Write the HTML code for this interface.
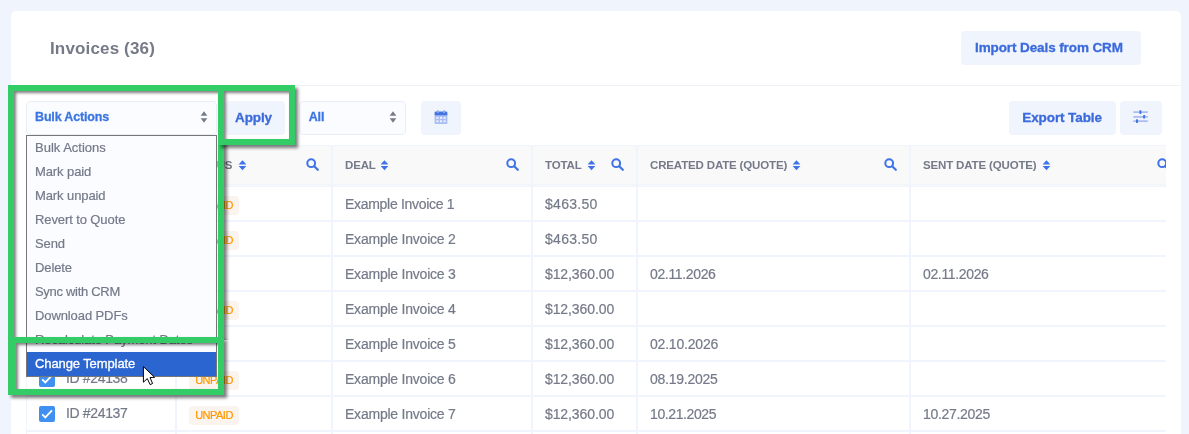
<!DOCTYPE html>
<html lang="en">
<head>
<meta charset="utf-8">
<title>Invoices</title>
<style>
*{box-sizing:border-box;margin:0;padding:0}
html,body{width:1189px;height:434px;overflow:hidden}
body{background:#f0f4fd;-webkit-font-smoothing:antialiased;font-family:"Liberation Sans",Arial,sans-serif;color:#747a89;position:relative}
.abs{position:absolute}
.tbl,.dd,.btn,.sel,.title{will-change:transform}
svg{display:block}
.card{position:absolute;left:11px;top:11px;width:1170px;height:500px;background:#fff;border-radius:5px}
.title{position:absolute;left:50px;top:39px;font-size:17px;font-weight:bold;color:#757a86;line-height:20px;white-space:nowrap;letter-spacing:.15px}
.hr{position:absolute;left:11px;top:85px;width:1170px;height:1px;background:#eef1f6}
.btn{position:absolute;background:#f0f4fd;border-radius:4px;color:#3b6bdb;font-weight:bold;font-size:13.5px;text-align:left;padding-left:14px;white-space:nowrap;letter-spacing:-.1px;line-height:33px;-webkit-text-stroke:.3px #3b6bdb}
.sel{position:absolute;background:#fbfcff;border:1px solid #e9eef6;border-radius:4px;color:#3b76e1;font-weight:bold;font-size:12.5px;white-space:nowrap;letter-spacing:-.15px;-webkit-text-stroke:.3px #3b76e1}
.sel span{position:absolute;left:8px;top:0;line-height:30px}
.sel svg{position:absolute;right:8px;top:9px}
.tbl{position:absolute;left:26px;top:145px;width:1140px;height:289px;overflow:hidden;background:#fff;border-left:1px solid #f0f4fd}
.th{position:absolute;top:0;height:42px;background:#f9f9f9;border-top:1px solid #f0f4fd;border-right:2px solid #f0f4fd;border-bottom:1px solid #f0f4fd;font-size:11.5px;font-weight:bold;color:#747a89;text-transform:uppercase;white-space:nowrap;letter-spacing:-.15px}
.th:after{content:"";position:absolute;left:0;right:0;top:38px;height:1px;background:#f0f4fd}
.th .lbl{position:absolute;left:12px;top:-1px;line-height:41px}
.th svg.sort{position:absolute;top:13.5px;margin-left:-.5px}
.th svg.mag{position:absolute;top:12px}
.row{position:absolute;left:0;width:1140px;height:35px;border-bottom:2px solid #f0f4fd}
.cell{position:absolute;top:0;height:35px;border-right:2px solid #f0f4fd;font-size:14px;color:#747a89;line-height:35px;white-space:nowrap;letter-spacing:-.15px;-webkit-text-stroke:.2px #747a89}
.cell .t{position:absolute;left:12px;top:0}
.badge{position:absolute;left:12px;top:9px;height:19px;width:50px;border-radius:4px;background:#fbf3ee;color:#ff9800;font-size:11px;line-height:19px;text-align:center;letter-spacing:-.5px;text-indent:0;-webkit-text-stroke:.2px #ff9800}
.badge.paid{width:28px;letter-spacing:-.6px;background:#e6f6fd;color:#35b8e8}
.cb{position:absolute;left:13px;top:9px;width:16px;height:16px;border-radius:2px;background:#3f90f1}
.g{position:absolute;border:6px solid #33cc66;box-shadow:3px 3px 3px rgba(0,0,0,.5), inset 2px 2px 3px rgba(0,0,0,.5)}
.dd{position:absolute;left:26px;top:135px;width:191px;height:242px;border:1px solid #767676;background:#fbfcff;font-size:13px;color:#747a89;letter-spacing:-.1px;-webkit-text-stroke:.2px #747a89}
.dd div{height:24px;line-height:23px;padding-left:8px;white-space:nowrap}
.dd div.on{background:#2b65d0;color:#fff;-webkit-text-stroke:.3px #fff}
</style>
</head>
<body>
<div class="card"></div>
<div class="title">Invoices (36)</div>
<div class="btn" style="left:961px;top:31px;width:180px;height:34px">Import Deals from CRM</div>
<div class="hr"></div>

<div class="sel" style="left:26px;top:101px;width:191px;height:34px"><span>Bulk Actions</span><svg width="8" height="12" viewBox="0 0 8 12"><path d="M4 0.3 L7.3 4.8 H0.7 Z M4 11.7 L7.3 7.2 H0.7 Z" fill="#757b8a"/></svg></div>
<div class="btn" style="left:225px;top:101px;width:60px;height:34px;padding-left:10px">Apply</div>
<div class="sel" style="left:299px;top:101px;width:107px;height:34px"><span style="left:8.7px">All</span><svg width="8" height="12" viewBox="0 0 8 12"><path d="M4 0.3 L7.3 4.8 H0.7 Z M4 11.7 L7.3 7.2 H0.7 Z" fill="#757b8a"/></svg></div>
<div class="btn" style="left:421px;top:101px;width:40px;height:34px"><svg class="abs" style="left:13px;top:9px" width="14" height="15" viewBox="0 0 14 15"><rect x="0.6" y="1.5" width="12.8" height="4.6" rx="1.3" fill="#4474e2"/><rect x="3" y="0.2" width="1.8" height="2.8" rx=".6" fill="#8fabf0"/><rect x="9.2" y="0.2" width="1.8" height="2.8" rx=".6" fill="#8fabf0"/><path d="M0.6 5.2 H13.4 V12.7 a1.3 1.3 0 0 1 -1.3 1.3 H1.9 a1.3 1.3 0 0 1 -1.3 -1.3 Z" fill="#a9bdf3"/><g fill="#eef3fe"><rect x="2.4" y="6.9" width="2.1" height="1.9"/><rect x="5.95" y="6.9" width="2.1" height="1.9"/><rect x="9.5" y="6.9" width="2.1" height="1.9"/><rect x="2.4" y="10.3" width="2.1" height="1.9"/><rect x="5.95" y="10.3" width="2.1" height="1.9"/><rect x="9.5" y="10.3" width="2.1" height="1.9"/></g></svg></div>
<div class="btn" style="left:1009px;top:101px;width:107px;height:34px;padding-left:13.3px">Export Table</div>
<div class="btn" style="left:1120px;top:101px;width:42px;height:34px"><svg class="abs" style="left:13px;top:9px" width="16" height="15" viewBox="0 0 16 15"><g stroke="#a9bdf3" stroke-width="1.7"><path d="M0.3 2.1H14.8M0.3 6.8H14.8M0.3 11.1H14.8"/></g><g fill="#3f74e8"><rect x="6.4" y="0.3" width="2" height="3.6" rx=".6"/><rect x="10.1" y="5" width="2" height="3.6" rx=".6"/><rect x="3" y="9.3" width="2" height="3.6" rx=".6"/></g></svg></div>

<div class="tbl">
<div class="th" style="left:-1px;width:151px"></div>
<div class="th" style="left:150px;width:156px"><span class="lbl">Status</span><svg class="sort" style="left:61.0px" width="9" height="11" viewBox="0 0 9 11"><path d="M4.5 0.2 L8.4 4.6 H0.6 Z M4.5 10.3 L8.4 5.9 H0.6 Z" fill="#3f74e8"/></svg><svg class="mag" style="left:129px" width="13" height="13" viewBox="0 0 13 13"><circle cx="5.2" cy="5.2" r="3.9" fill="none" stroke="#3f74e8" stroke-width="2"/><path d="M8.2 8.2 L11.8 11.8" stroke="#3f74e8" stroke-width="2.2" stroke-linecap="round"/></svg></div>
<div class="th" style="left:306px;width:200px"><span class="lbl">Deal</span><svg class="sort" style="left:47.3px" width="9" height="11" viewBox="0 0 9 11"><path d="M4.5 0.2 L8.4 4.6 H0.6 Z M4.5 10.3 L8.4 5.9 H0.6 Z" fill="#3f74e8"/></svg><svg class="mag" style="left:173px" width="13" height="13" viewBox="0 0 13 13"><circle cx="5.2" cy="5.2" r="3.9" fill="none" stroke="#3f74e8" stroke-width="2"/><path d="M8.2 8.2 L11.8 11.8" stroke="#3f74e8" stroke-width="2.2" stroke-linecap="round"/></svg></div>
<div class="th" style="left:506px;width:105px"><span class="lbl">Total</span><svg class="sort" style="left:54.0px" width="9" height="11" viewBox="0 0 9 11"><path d="M4.5 0.2 L8.4 4.6 H0.6 Z M4.5 10.3 L8.4 5.9 H0.6 Z" fill="#3f74e8"/></svg><svg class="mag" style="left:78px" width="13" height="13" viewBox="0 0 13 13"><circle cx="5.2" cy="5.2" r="3.9" fill="none" stroke="#3f74e8" stroke-width="2"/><path d="M8.2 8.2 L11.8 11.8" stroke="#3f74e8" stroke-width="2.2" stroke-linecap="round"/></svg></div>
<div class="th" style="left:611px;width:273px"><span class="lbl">Created Date (Quote)</span><svg class="sort" style="left:154.3px" width="9" height="11" viewBox="0 0 9 11"><path d="M4.5 0.2 L8.4 4.6 H0.6 Z M4.5 10.3 L8.4 5.9 H0.6 Z" fill="#3f74e8"/></svg><svg class="mag" style="left:246px" width="13" height="13" viewBox="0 0 13 13"><circle cx="5.2" cy="5.2" r="3.9" fill="none" stroke="#3f74e8" stroke-width="2"/><path d="M8.2 8.2 L11.8 11.8" stroke="#3f74e8" stroke-width="2.2" stroke-linecap="round"/></svg></div>
<div class="th" style="left:884px;width:301px"><span class="lbl">Sent Date (Quote)</span><svg class="sort" style="left:131.5px" width="9" height="11" viewBox="0 0 9 11"><path d="M4.5 0.2 L8.4 4.6 H0.6 Z M4.5 10.3 L8.4 5.9 H0.6 Z" fill="#3f74e8"/></svg><svg class="mag" style="left:246px" width="13" height="13" viewBox="0 0 13 13"><circle cx="5.2" cy="5.2" r="3.9" fill="none" stroke="#3f74e8" stroke-width="2"/><path d="M8.2 8.2 L11.8 11.8" stroke="#3f74e8" stroke-width="2.2" stroke-linecap="round"/></svg></div>
<div class="row" style="top:42px"><div class="cell" style="left:-1px;width:151px"><span class="cb"><svg width="16" height="16" viewBox="0 0 16 16"><path d="M3.2 8.4 L6.3 11.4 L13 4.3" fill="none" stroke="#fff" stroke-width="1.8"/></svg></span><span class="t" style="left:40px;top:-1px;letter-spacing:-.35px">ID #24143</span></div><div class="cell" style="left:150px;width:156px"><span class="badge">UNPAID</span></div><div class="cell" style="left:306px;width:200px"><span class="t" style="letter-spacing:-0.3px">Example Invoice 1</span></div><div class="cell" style="left:506px;width:105px"><span class="t" style="letter-spacing:0.3px">$463.50</span></div><div class="cell" style="left:611px;width:273px"></div><div class="cell" style="left:884px;width:301px"></div></div>
<div class="row" style="top:77px"><div class="cell" style="left:-1px;width:151px"><span class="cb"><svg width="16" height="16" viewBox="0 0 16 16"><path d="M3.2 8.4 L6.3 11.4 L13 4.3" fill="none" stroke="#fff" stroke-width="1.8"/></svg></span><span class="t" style="left:40px;top:-1px;letter-spacing:-.35px">ID #24142</span></div><div class="cell" style="left:150px;width:156px"><span class="badge">UNPAID</span></div><div class="cell" style="left:306px;width:200px"><span class="t" style="letter-spacing:-0.22px">Example Invoice 2</span></div><div class="cell" style="left:506px;width:105px"><span class="t" style="letter-spacing:0.3px">$463.50</span></div><div class="cell" style="left:611px;width:273px"></div><div class="cell" style="left:884px;width:301px"></div></div>
<div class="row" style="top:112px"><div class="cell" style="left:-1px;width:151px"><span class="cb"><svg width="16" height="16" viewBox="0 0 16 16"><path d="M3.2 8.4 L6.3 11.4 L13 4.3" fill="none" stroke="#fff" stroke-width="1.8"/></svg></span><span class="t" style="left:40px;top:-1px;letter-spacing:-.35px">ID #24141</span></div><div class="cell" style="left:150px;width:156px"><span class="badge paid">PAID</span></div><div class="cell" style="left:306px;width:200px"><span class="t" style="letter-spacing:-0.22px">Example Invoice 3</span></div><div class="cell" style="left:506px;width:105px"><span class="t" style="letter-spacing:-0.1px">$12,360.00</span></div><div class="cell" style="left:611px;width:273px"><span class="t" style="letter-spacing:-0.35px">02.11.2026</span></div><div class="cell" style="left:884px;width:301px"><span class="t" style="letter-spacing:-0.35px">02.11.2026</span></div></div>
<div class="row" style="top:147px"><div class="cell" style="left:-1px;width:151px"><span class="cb"><svg width="16" height="16" viewBox="0 0 16 16"><path d="M3.2 8.4 L6.3 11.4 L13 4.3" fill="none" stroke="#fff" stroke-width="1.8"/></svg></span><span class="t" style="left:40px;top:-1px;letter-spacing:-.35px">ID #24140</span></div><div class="cell" style="left:150px;width:156px"><span class="badge">UNPAID</span></div><div class="cell" style="left:306px;width:200px"><span class="t" style="letter-spacing:-0.22px">Example Invoice 4</span></div><div class="cell" style="left:506px;width:105px"><span class="t" style="letter-spacing:-0.1px">$12,360.00</span></div><div class="cell" style="left:611px;width:273px"></div><div class="cell" style="left:884px;width:301px"></div></div>
<div class="row" style="top:182px"><div class="cell" style="left:-1px;width:151px"><span class="cb"><svg width="16" height="16" viewBox="0 0 16 16"><path d="M3.2 8.4 L6.3 11.4 L13 4.3" fill="none" stroke="#fff" stroke-width="1.8"/></svg></span><span class="t" style="left:40px;top:-1px;letter-spacing:-.35px">ID #24139</span></div><div class="cell" style="left:150px;width:156px"><span class="badge paid">PAID</span></div><div class="cell" style="left:306px;width:200px"><span class="t" style="letter-spacing:-0.22px">Example Invoice 5</span></div><div class="cell" style="left:506px;width:105px"><span class="t" style="letter-spacing:-0.1px">$12,360.00</span></div><div class="cell" style="left:611px;width:273px"><span class="t" style="letter-spacing:-0.2px">02.10.2026</span></div><div class="cell" style="left:884px;width:301px"></div></div>
<div class="row" style="top:217px"><div class="cell" style="left:-1px;width:151px"><span class="cb"><svg width="16" height="16" viewBox="0 0 16 16"><path d="M3.2 8.4 L6.3 11.4 L13 4.3" fill="none" stroke="#fff" stroke-width="1.8"/></svg></span><span class="t" style="left:40px;top:-1px;letter-spacing:-.35px">ID #24138</span></div><div class="cell" style="left:150px;width:156px"><span class="badge">UNPAID</span></div><div class="cell" style="left:306px;width:200px"><span class="t" style="letter-spacing:-0.22px">Example Invoice 6</span></div><div class="cell" style="left:506px;width:105px"><span class="t" style="letter-spacing:-0.1px">$12,360.00</span></div><div class="cell" style="left:611px;width:273px"><span class="t" style="letter-spacing:-0.25px">08.19.2025</span></div><div class="cell" style="left:884px;width:301px"></div></div>
<div class="row" style="top:252px"><div class="cell" style="left:-1px;width:151px"><span class="cb"><svg width="16" height="16" viewBox="0 0 16 16"><path d="M3.2 8.4 L6.3 11.4 L13 4.3" fill="none" stroke="#fff" stroke-width="1.8"/></svg></span><span class="t" style="left:40px;top:-1px;letter-spacing:-.35px">ID #24137</span></div><div class="cell" style="left:150px;width:156px"><span class="badge">UNPAID</span></div><div class="cell" style="left:306px;width:200px"><span class="t" style="letter-spacing:-0.22px">Example Invoice 7</span></div><div class="cell" style="left:506px;width:105px"><span class="t" style="letter-spacing:-0.1px">$12,360.00</span></div><div class="cell" style="left:611px;width:273px"><span class="t" style="letter-spacing:-0.4px">10.21.2025</span></div><div class="cell" style="left:884px;width:301px"><span class="t" style="letter-spacing:-0.3px">10.27.2025</span></div></div>
<div class="row" style="top:287px"><div class="cell" style="left:-1px;width:151px"></div><div class="cell" style="left:150px;width:156px"></div><div class="cell" style="left:306px;width:200px"></div><div class="cell" style="left:506px;width:105px"></div><div class="cell" style="left:611px;width:273px"></div><div class="cell" style="left:884px;width:301px"></div></div>
</div>

<div class="dd">
<div style="letter-spacing:0">Bulk Actions</div><div>Mark paid</div><div>Mark unpaid</div><div>Revert to Quote</div><div>Send</div><div>Delete</div><div style="letter-spacing:-.3px">Sync with CRM</div><div>Download PDFs</div><div>Recalculate Payment Dates</div><div class="on">Change Template</div>
</div>

<div class="g" style="left:8px;top:85px;width:216px;height:258px;clip-path:polygon(-10px -10px,216px -10px,216px 56px,232px 56px,232px 255px,216px 255px,216px 258px,-10px 258px)"></div>
<div class="g" style="left:218px;top:85px;width:77px;height:60px"></div>
<div class="g" style="left:8px;top:337px;width:216px;height:58px;border-left-width:8px"></div>

<svg class="abs" style="left:142px;top:364px" width="16" height="24" viewBox="0 0 16 24"><path d="M1.4 2.6 V18.2 L5.3 14.6 L8.1 20.6 L10.6 19.5 L8 13.6 L12.6 13.3 Z" fill="#fff" stroke="#000" stroke-width="1" stroke-linejoin="round"/></svg>
</body>
</html>
